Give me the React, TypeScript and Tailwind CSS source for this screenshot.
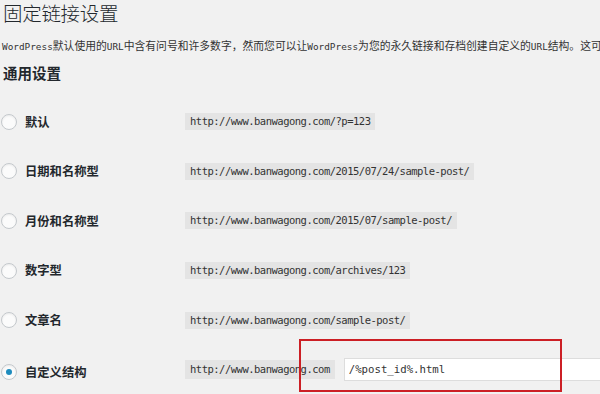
const rows = [
  { label: "默认", url: "http://www.banwagong.com/?p=123" },
  { label: "日期和名称型", url: "http://www.banwagong.com/2015/07/24/sample-post/" },
  { label: "月份和名称型", url: "http://www.banwagong.com/2015/07/sample-post/" },
  { label: "数字型", url: "http://www.banwagong.com/archives/123" },
  { label: "文章名", url: "http://www.banwagong.com/sample-post/" },
];

const cjk = { fontFamily: '"Noto Sans CJK SC", "Noto Sans", sans-serif' };
const mono = "font-['DejaVu_Sans_Mono','Liberation_Mono',monospace]";

const Radio = ({ checked }: { checked?: boolean }) => (
  <span className="flex shrink-0 items-center justify-center w-4 h-4 rounded-full border border-[#c4c8cc] bg-[#fbfbfb] shadow-[inset_0_1px_2px_rgba(0,0,0,0.07)]">
    {checked && <span className="w-[6px] h-[6px] rounded-full bg-[#1e8cbe]" />}
  </span>
);

const Code = ({ children }: { children: string }) => (
  <code
    className={`${mono} inline-block shrink-0 h-[17px] leading-[17px] px-[5px] bg-[#e4e4e4] text-[#333] text-[10.5px] tracking-[-0.5px]`}
  >
    {children}
  </code>
);

const Latin = ({ children }: { children: string }) => (
  <span className={`${mono} text-[9.4px]`}>{children}</span>
);

export default function App() {
  return (
    <div
      className="relative w-[600px] h-[394px] overflow-hidden bg-[#f1f1f1] text-[#23282d]"
      style={cjk}
    >
      <h1 className="h-[26px] leading-[26px] pl-[3px] text-[19.5px] font-light tracking-[-0.3px]">
        固定链接设置
      </h1>

      <p className="mt-[9px] h-[20px] leading-[20px] pl-[2px] text-[10.8px] whitespace-nowrap text-[#333]">
        <Latin>WordPress</Latin>默认使用的<Latin>URL</Latin>
        中含有问号和许多数字，然而您可以让<Latin>WordPress</Latin>
        为您的永久链接和存档创建自定义的<Latin>URL</Latin>结构。这可以改善链接的美观性
      </p>

      <h2 className="mt-[8px] h-[20px] leading-[20px] pl-[3px] text-[14.5px] font-bold">
        通用设置
      </h2>

      <div className="mt-[14px] flex flex-col">
        {rows.map((r) => (
          <div key={r.label} className="h-[49.6px] flex items-center">
            <div className="w-[185px] shrink-0 flex items-center pl-[1px]">
              <Radio />
              <span className="ml-[8px] text-[12.3px] font-bold">{r.label}</span>
            </div>
            <Code>{r.url}</Code>
          </div>
        ))}
        <div className="h-[49.6px] flex items-center">
          <div className="w-[185px] shrink-0 flex items-center pl-[1px] mt-[4px]">
            <Radio checked />
            <span className="ml-[8px] text-[12.3px] font-bold">自定义结构</span>
          </div>
          <code
            className={`${mono} inline-block shrink-0 h-[19px] leading-[19px] px-[5px] bg-[#e4e4e4] text-[#333] text-[10.5px] tracking-[-0.5px]`}
          >
            http://www.banwagong.com
          </code>
          <input
            readOnly
            value="/%post_id%.html"
            className={`${mono} ml-[9px] w-[270px] shrink-0 h-[23px] px-[4px] bg-white border border-[#dddddd] text-[10.7px] text-[#333] outline-none`}
          />
        </div>
      </div>

      <div className="absolute left-[299px] top-[339px] w-[263px] h-[53px] border-2 border-[#cc1f25]" />
    </div>
  );
}
